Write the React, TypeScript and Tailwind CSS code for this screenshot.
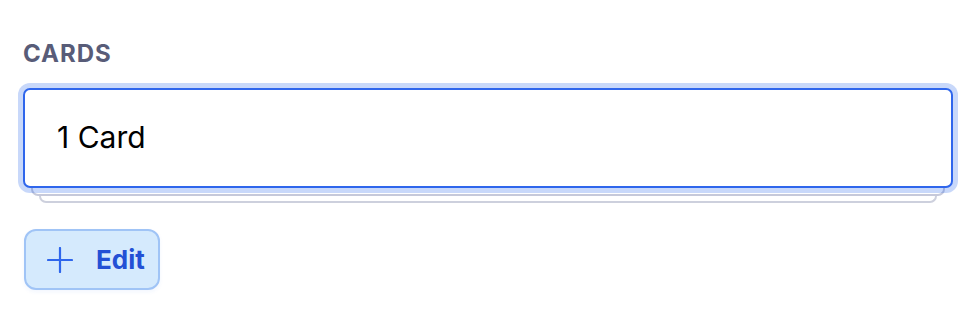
export default function App() {
  return (
    <main className="min-h-screen bg-white pl-[23px] pt-[40px] font-['Inter',sans-serif]">
      {/* ── Section label ── */}
      <div className="text-[24px] font-bold leading-[28px] tracking-[0.04em] text-[#585c78]">CARDS</div>

      {/* ── Card stack ── */}
      <div className="mt-[20px] w-[930px]">
        <div className="relative z-20 flex h-[100px] items-center rounded-[7px] border-2 border-[#2f66ec] bg-white pb-[2px] pl-[32px] ring-[5px] ring-[#2563eb]/25">
          <span className="text-[30px] leading-none text-black">1 Card</span>
        </div>
        <div className="relative z-10 mx-[8px] -mt-[8px] h-[16px] rounded-b-[7px] border-2 border-t-0 border-[#c6c9da] bg-white" />
        <div className="relative z-0 mx-[16px] -mt-[9px] h-[16px] rounded-b-[7px] border-2 border-t-0 border-[#cdd0dd] bg-white" />
      </div>

      {/* ── Edit button ── */}
      <button className="ml-px mt-[26px] flex h-[61px] w-[136px] items-center rounded-[12px] border-2 border-[#a0c4f6] bg-[#d5eafd] pl-[21px] shadow-[0_2px_4px_rgba(37,99,235,0.06)]">
        <svg width="26" height="26" viewBox="0 0 26 26" fill="none" stroke="#2f66ec" strokeWidth="2.2" strokeLinecap="round">
          <path d="M1 13h24M13 1v24" />
        </svg>
        <span className="ml-[23px] text-[26px] font-bold leading-none text-[#2350d5]">Edit</span>
      </button>
    </main>
  );
}
